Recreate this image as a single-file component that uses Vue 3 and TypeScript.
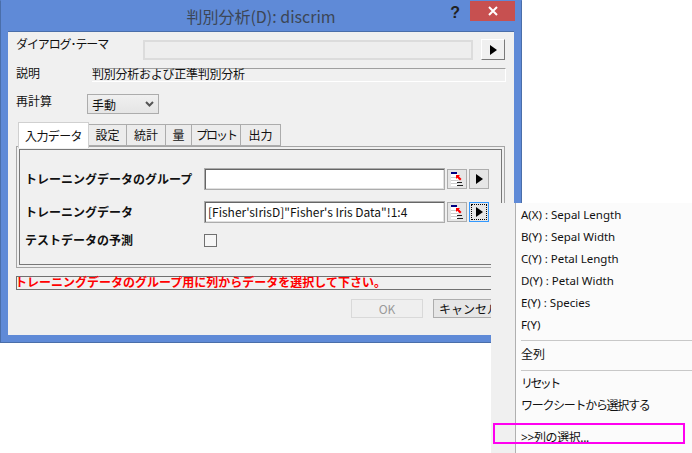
<script setup lang="ts">
const tabs = ['入力データ', '設定', '統計', '量', 'プロット', '出力']
const tabWidths = [71, 38, 39, 26, 49, 40]

const columns = [
  'A(X) : Sepal Length',
  'B(Y) : Sepal Width',
  'C(Y) : Petal Length',
  'D(Y) : Petal Width',
  'E(Y) : Species',
  'F(Y)'
]
</script>

<template>
  <div class="page">
    <div class="dialog">
      <div class="titlebar">
        <span class="caption">判別分析(D): discrim</span>
        <span class="help">?</span>
        <span class="close">
          <svg width="10" height="10" viewBox="0 0 10 10">
            <path d="M1 1 L9 9 M9 1 L1 9" stroke="#fff" stroke-width="2" />
          </svg>
        </span>
      </div>

      <div class="body">
        <div class="row theme-row">
          <span class="theme-label">ダイアログ･テーマ</span>
          <div class="theme-input"></div>
          <button class="arrow-btn theme-btn"><i class="arrow"></i></button>
        </div>

        <div class="row desc-row">
          <span class="desc-label">説明</span>
          <div class="desc-text">判別分析および正準判別分析</div>
        </div>

        <div class="row recalc-row">
          <span class="recalc-label">再計算</span>
          <div class="select">
            <span>手動</span>
            <svg width="9" height="6" viewBox="0 0 9 6">
              <path d="M1 1 L4.5 4.5 L8 1" fill="none" stroke="#555" stroke-width="2" />
            </svg>
          </div>
        </div>

        <div class="tabs">
          <div
            v-for="(tab, i) in tabs"
            :key="tab"
            class="tab"
            :class="{ active: i === 0, narrow: tab === 'プロット' }"
            :style="{ width: tabWidths[i] + 'px' }"
          >
            {{ tab }}
          </div>
        </div>

        <div class="panel">
          <div class="panel-inner">
            <div class="row field-row first">
              <span class="field-label">トレーニングデータのグループ</span>
              <div class="field-input"></div>
              <button class="icon-btn">
                <svg width="16" height="16" viewBox="0 0 16 16">
                  <rect x="2" y="3" width="7" height="12" fill="#fff" />
                  <path d="M2 6.5 H9 M2 9.5 H9 M2 12.5 H9" stroke="#ccc" stroke-width="1" />
                  <rect x="2" y="1" width="6" height="2" fill="#000080" />
                  <path d="M8 11.5 H13 M8 14.5 H14" stroke="#222" stroke-width="1" />
                  <path d="M7 4 H11 L9.8 5.2 L12.5 8 L11 9.5 L8.2 6.8 L7 8 Z" fill="#f00" />
                </svg>
              </button>
              <button class="arrow-btn small"><i class="arrow"></i></button>
            </div>

            <div class="row field-row second">
              <span class="field-label">トレーニングデータ</span>
              <div class="field-input">[Fisher'sIrisD]"Fisher's Iris Data"!1:4</div>
              <button class="icon-btn">
                <svg width="16" height="16" viewBox="0 0 16 16">
                  <rect x="2" y="3" width="7" height="12" fill="#fff" />
                  <path d="M2 6.5 H9 M2 9.5 H9 M2 12.5 H9" stroke="#ccc" stroke-width="1" />
                  <rect x="2" y="1" width="6" height="2" fill="#000080" />
                  <path d="M8 11.5 H13 M8 14.5 H14" stroke="#222" stroke-width="1" />
                  <path d="M7 4 H11 L9.8 5.2 L12.5 8 L11 9.5 L8.2 6.8 L7 8 Z" fill="#f00" />
                </svg>
              </button>
              <button class="arrow-btn small focused">
                <span class="focus-ring"><i class="arrow"></i></span>
              </button>
            </div>

            <div class="row field-row third">
              <span class="field-label">テストデータの予測</span>
              <div class="checkbox"></div>
            </div>
          </div>
        </div>

        <div class="message">トレーニングデータのグループ用に列からデータを選択して下さい。</div>

        <div class="row actions">
          <button class="btn disabled">OK</button>
          <button class="btn">キャンセル</button>
        </div>
      </div>
    </div>

    <div class="menu">
      <div v-for="col in columns" :key="col" class="menu-item">{{ col }}</div>
      <div class="menu-sep"></div>
      <div class="menu-item cjk">全列</div>
      <div class="menu-sep lower"></div>
      <div class="menu-item cjk kana">リセット</div>
      <div class="menu-item cjk tight">ワークシートから選択する</div>
      <div class="menu-item cjk last">&gt;&gt;列の選択...</div>
    </div>
    <div class="highlight"></div>
  </div>
</template>

<style scoped>
.page {
  position: relative;
  width: 692px;
  height: 453px;
  overflow: hidden;
  background: #fff;
  font-family: "Noto Sans CJK JP", "Noto Sans", sans-serif;
  font-size: 12px;
  color: #111;
}

.dialog {
  width: 522px;
  height: 343px;
  box-sizing: border-box;
  background: #5f8ad7;
  border: 1px solid #4a6ea9;
  border-top-color: #5f8ad7;
  padding: 0 7px 7px 7px;
  display: flex;
  flex-direction: column;
}

.titlebar {
  position: relative;
  height: 30px;
  flex: none;
  display: flex;
  justify-content: center;
  align-items: center;
}

.caption {
  font-size: 16px;
  color: #3c4656;
}

.help {
  position: absolute;
  right: 54px;
  top: 3px;
  font-family: "Liberation Sans", sans-serif;
  font-weight: bold;
  font-size: 16px;
  color: #222;
}

.close {
  position: absolute;
  right: -1px;
  top: 0;
  width: 45px;
  height: 20px;
  background: #c75050;
  display: flex;
  align-items: center;
  justify-content: center;
}

.body {
  flex: 1;
  background: #f0f0f0;
  border-top: 1px solid #4a6ea9;
  padding: 0 8px;
  min-height: 0;
}

.row {
  display: flex;
  align-items: center;
}

.theme-row {
  height: 21px;
  margin-top: 7px;
}

.theme-label {
  width: 127px;
  margin-top: -12px;
  letter-spacing: -1.1px;
  white-space: nowrap;
}

.theme-input {
  width: 330px;
  height: 20px;
  box-sizing: border-box;
  border: 2px solid #dcdcdc;
  background: #eeeeee;
}

.arrow-btn {
  box-sizing: border-box;
  padding: 0;
  background: #f0f0f0;
  border: 1px solid #adadad;
  display: flex;
  align-items: center;
  justify-content: center;
}

.arrow {
  display: block;
  width: 0;
  height: 0;
  border-left: 7px solid #000;
  border-top: 5px solid transparent;
  border-bottom: 5px solid transparent;
}

.theme-btn {
  width: 24px;
  height: 21px;
  margin-left: 8px;
  border-color: #fff #7a7a7a #7a7a7a #fff;
}

.desc-row {
  height: 14px;
  margin-top: 8px;
}

.desc-label {
  width: 76px;
  margin-top: -6px;
}

.desc-text {
  width: 414px;
  height: 14px;
  box-sizing: border-box;
  border-top: 1px solid #a0a0a0;
  border-bottom: 1px solid #fff;
  border-right: 1px solid #fff;
  line-height: 10px;
  letter-spacing: -0.25px;
  white-space: nowrap;
}

.recalc-row {
  height: 20px;
  margin-top: 12px;
}

.recalc-label {
  width: 71px;
  margin-top: -8px;
}

.select {
  width: 72px;
  height: 20px;
  box-sizing: border-box;
  border: 1px solid #acacac;
  background: linear-gradient(#f0f0f0, #e5e5e5);
  display: flex;
  align-items: center;
  justify-content: space-between;
  padding: 0 4px 0 4px;
}

.tabs {
  display: flex;
  align-items: flex-end;
  height: 26px;
  margin: 8px 0 -2px 2px;
  position: relative;
  z-index: 1;
}

.tab {
  height: 22px;
  box-sizing: border-box;
  border: 1px solid #acacac;
  border-left: none;
  background: #ececec;
  text-align: center;
  line-height: 20px;
  margin-bottom: 2px;
  white-space: nowrap;
}

.tab.narrow {
  letter-spacing: -2px;
}

.tab.active {
  height: 26px;
  margin-bottom: 0;
  background: #fff;
  border: 1px solid #d0d0d0;
  border-bottom: none;
  line-height: 26px;
  letter-spacing: -0.6px;
}

.panel {
  width: 489px;
  height: 122px;
  box-sizing: border-box;
  border: 1px solid #a5a5a5;
  padding: 2px;
}

.panel-inner {
  height: 100%;
  width: 483px;
  box-sizing: border-box;
  border: 1px solid #777;
  padding: 0 0 0 5px;
}

.field-row {
  height: 22px;
}

.field-row.first {
  margin-top: 18px;
}

.field-row.second {
  margin-top: 11px;
}

.field-row.third {
  height: 14px;
  margin-top: 10px;
}

.field-label {
  width: 179px;
  margin-top: -1px;
  font-weight: bold;
  white-space: nowrap;
}

.field-row.second .field-label,
.field-row.third .field-label {
  margin-top: -2px;
}

.field-input {
  width: 241px;
  height: 22px;
  box-sizing: border-box;
  border: 1px solid #acacac;
  box-shadow: inset 1px 1px 0 #666, inset -1px -1px 0 #e0e0e0;
  background: #fff;
  padding-left: 3px;
  line-height: 20px;
  white-space: nowrap;
  overflow: hidden;
}

.icon-btn {
  width: 20px;
  height: 20px;
  margin-left: 2px;
  padding: 0;
  box-sizing: border-box;
  border: 1px solid #adadad;
  background: #e6e6e6;
  display: flex;
  align-items: center;
  justify-content: center;
}

.arrow-btn.small {
  width: 20px;
  height: 20px;
  margin-left: 2px;
  background: #e6e6e6;
}

.arrow-btn.focused {
  border: 1px solid #3399ff;
  width: 20px;
  height: 20px;
}

.focus-ring {
  width: 16px;
  height: 16px;
  box-sizing: border-box;
  border: 1px dotted #000;
  display: flex;
  align-items: center;
  justify-content: center;
}

.checkbox {
  width: 13px;
  height: 13px;
  box-sizing: border-box;
  border: 1px solid #707070;
  background: #f6f6f6;
}

.message {
  width: 476px;
  height: 14px;
  margin-top: 8px;
  box-sizing: border-box;
  border: 1px solid #707070;
  border-right: none;
  color: #f00;
  font-weight: bold;
  line-height: 10px;
  text-indent: -2px;
  white-space: nowrap;
}

.actions {
  margin-top: 9px;
}

.btn {
  width: 72px;
  height: 19px;
  padding: 0;
  box-sizing: border-box;
  border: 1px solid #adadad;
  background: #e6e6e6;
  font: inherit;
  color: #111;
  line-height: 16px;
}

.btn.disabled {
  margin-left: 335px;
  border-color: #d9d9d9;
  background: #efefef;
  color: #9a9a9a;
}

.btn:not(.disabled) {
  margin-left: 10px;
  white-space: nowrap;
}

.menu {
  position: absolute;
  left: 491px;
  top: 203px;
  width: 201px;
  height: 250px;
  box-sizing: border-box;
  background: linear-gradient(to right, #f0f0f0 24px, #b0b0b0 24px, #b0b0b0 25px, #fbfbfb 25px);
  padding-top: 1px;
}

.menu-item {
  height: 22px;
  line-height: 21px;
  padding-left: 30px;
  font-family: "Noto Sans", "Noto Sans CJK JP", sans-serif;
  font-size: 11.5px;
  color: #111;
  white-space: nowrap;
}

.menu-item.cjk {
  font-size: 12px;
  line-height: 23px;
}

.menu-item.kana {
  letter-spacing: -2.6px;
}

.menu-item.tight {
  letter-spacing: -1.3px;
}

.menu-item.last {
  margin-top: 10px;
  letter-spacing: -0.4px;
}

.menu-sep {
  height: 1px;
  margin: 4px 0 2px 30px;
  background: #c8c8c8;
}

.menu-sep.lower {
  margin: 5px 0 1px 30px;
}

.highlight {
  position: absolute;
  left: 493px;
  top: 423px;
  width: 192px;
  height: 21px;
  box-sizing: border-box;
  border: 2px solid #ff00f0;
}
</style>
